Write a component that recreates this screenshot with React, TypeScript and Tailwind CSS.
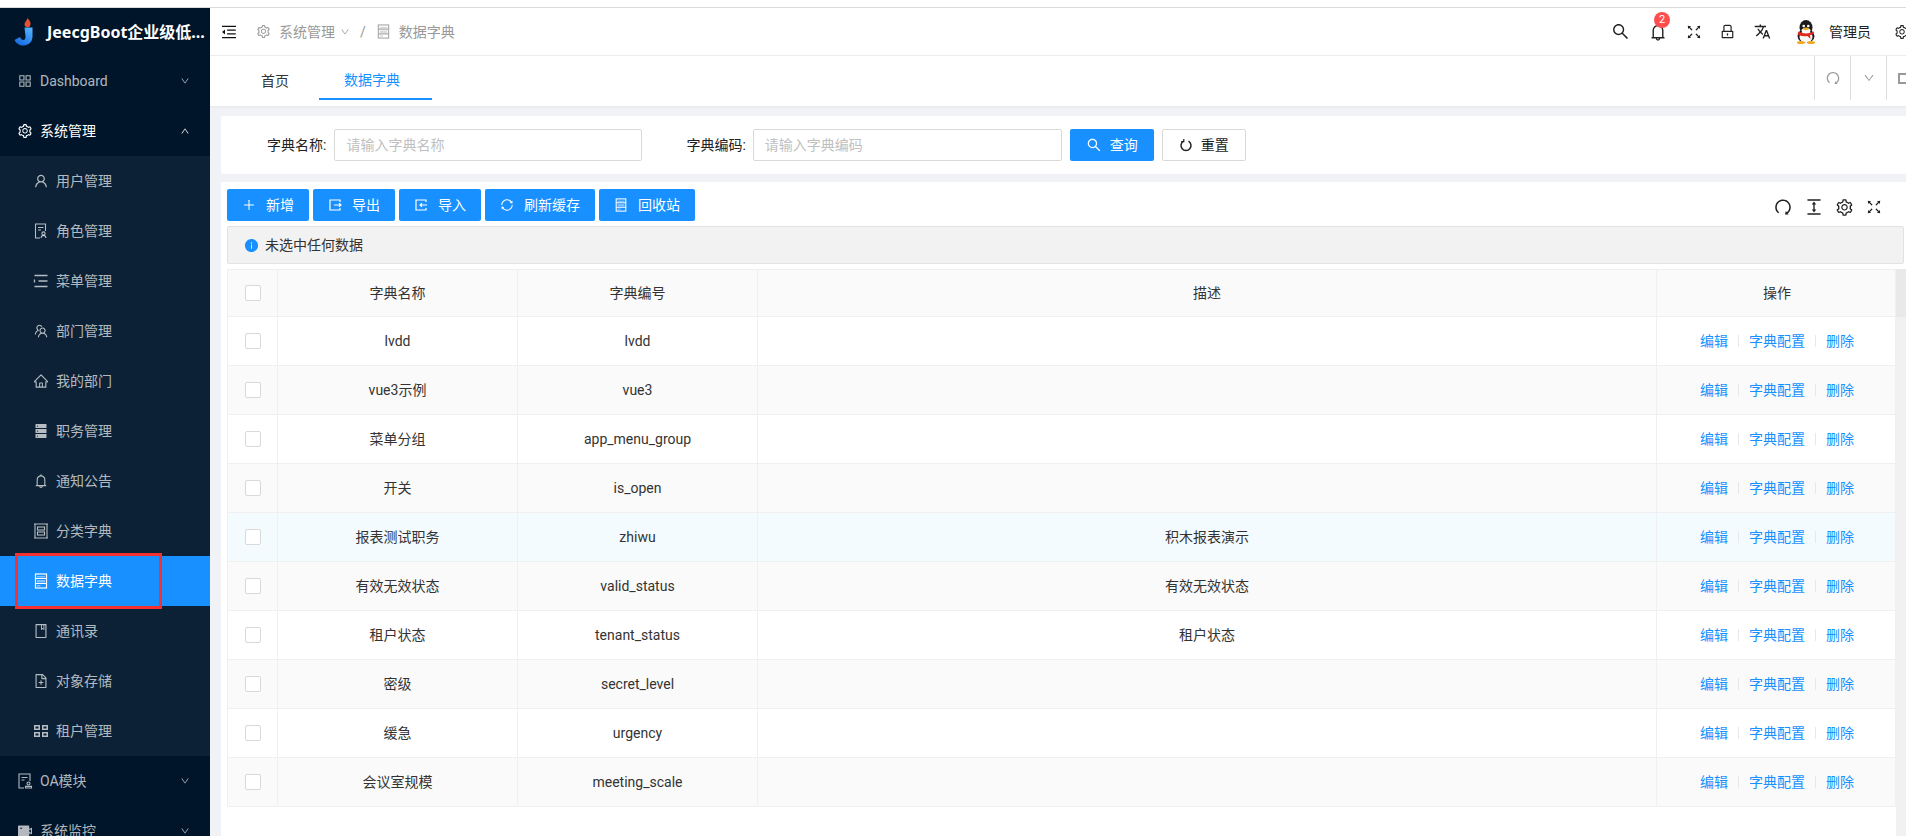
import {
  AiFillDatabase,
  AiFillInfoCircle,
  AiFillVideoCamera,
  AiOutlineAppstore,
  AiOutlineBell,
  AiOutlineBook,
  AiOutlineColumnHeight,
  AiOutlineDown,
  AiOutlineFileAdd,
  AiOutlineFullscreen,
  AiOutlineHome,
  AiOutlineLock,
  AiOutlineMenuFold,
  AiOutlinePlus,
  AiOutlineRedo,
  AiOutlineSearch,
  AiOutlineSetting,
  AiOutlineSync,
  AiOutlineTeam,
  AiOutlineUp,
  AiOutlineUser,
} from "react-icons/ai";
import { MdTranslate } from "react-icons/md";

const font = "font-['Roboto','Noto_Sans_CJK_SC',sans-serif]";

function Logo() {
  return (
    <svg width="20" height="28" viewBox="0 0 20 28">
      <defs>
        <linearGradient id="jblue" x1="0.8" y1="0" x2="0.2" y2="1">
          <stop offset="0" stopColor="#4fb2ff" />
          <stop offset="1" stopColor="#1468e0" />
        </linearGradient>
      </defs>
      <path d="M13.500 0c1.500 2 3.500 4 3 6.500-.4 2-1.600 2.800-3 2.800-1.600 0-3-1-3-3 0-2.300 2.500-3.500 3-6.300z" fill="#e8502f" />
      <path d="M10.500 9.500h8v9c0 5.500-4 9-9 9-4 0-7.500-2-9-5.500l5.500-3c.7 1.800 2 3 3.300 3 1.500 0 2.200-1.300 2.200-3.500z" fill="url(#jblue)" />
    </svg>
  );
}

function Penguin() {
  return (
    <svg width="22" height="24" viewBox="0 0 22 24">
      <ellipse cx="11" cy="7.500" rx="6.500" ry="7.500" fill="#1c1c1c" />
      <ellipse cx="11" cy="16" rx="8.500" ry="7" fill="#1c1c1c" />
      <ellipse cx="11" cy="17" rx="6.500" ry="6" fill="#f7f7f7" />
      <ellipse cx="11" cy="10.500" rx="4.500" ry="2.500" fill="#f7f7f7" />
      <circle cx="8.700" cy="6" r="1.300" fill="#fff" />
      <circle cx="13.300" cy="6" r="1.300" fill="#fff" />
      <ellipse cx="11" cy="8.700" rx="3" ry="1.300" fill="#f2a81d" />
      <path d="M3.500 11.500c4.500 2.500 10.500 2.500 15 0l.5 2.500-4 1.200.5 3.800-3-3c-3 .5-6 .3-8.500-.7l-1.500-1z" fill="#e0281c" />
      <ellipse cx="6" cy="22.500" rx="4" ry="1.500" fill="#f2a81d" />
      <ellipse cx="16" cy="22.500" rx="4" ry="1.500" fill="#f2a81d" />
    </svg>
  );
}

function DictIcon({ size = 16 }: { size?: number }) {
  return (
    <svg width={size} height={size} viewBox="0 0 16 16" fill="none" stroke="currentColor" strokeWidth="1.200">
      <rect x="2.500" y="1" width="11" height="14" />
      <path d="M2.500 5.500h11M2.500 10.500h11" />
      <rect x="4" y="3" width="8" height="1.500" fill="currentColor" opacity="0.45" stroke="none" />
      <rect x="4" y="7" width="8" height="2.500" fill="currentColor" opacity="0.45" stroke="none" />
      <rect x="4" y="12" width="3.500" height="1.500" fill="currentColor" opacity="0.45" stroke="none" />
    </svg>
  );
}

function FrameIcon() {
  return (
    <svg width="16" height="16" viewBox="0 0 16 16" fill="none" stroke="currentColor" strokeWidth="1.100">
      <path d="M1 1h14M1 15h14M2 1v14M14 1v14" />
      <rect x="4.500" y="4" width="7" height="3" />
      <rect x="4.500" y="9" width="7" height="3" />
    </svg>
  );
}

function RoleIcon() {
  return (
    <svg width="16" height="16" viewBox="0 0 16 16" fill="none" stroke="currentColor" strokeWidth="1.100">
      <path d="M7 15H2.500V1h10v7" />
      <path d="M5 4.500h5.500M5 7h3" />
      <circle cx="10.500" cy="10.500" r="1.600" />
      <path d="M8 15c.3-1.800 1.200-2.600 2.500-2.600s2.200.8 2.500 2.600" />
    </svg>
  );
}

function MenuIcon() {
  return (
    <svg width="16" height="16" viewBox="0 0 16 16" fill="none" stroke="currentColor" strokeWidth="1.300">
      <path d="M1.500 2.500h13M5.500 8h9M1.500 13.500h13" />
      <path d="M1.500 6.500v3" />
    </svg>
  );
}

function TenantIcon() {
  return (
    <svg width="16" height="16" viewBox="0 0 16 16" fill="currentColor">
      <path fillRule="evenodd" d="M1 2h6v5H1zM2.500 3.500v2h3v-2zM9 2h6v5H9zM10.500 3.500v2h3v-2zM1 9h6v5H1zM2.500 10.500v2h3v-2zM9 9h6v5H9zM10.500 10.500v2h3v-2z" />
    </svg>
  );
}

function OaIcon() {
  return (
    <svg width="16" height="16" viewBox="0 0 16 16" fill="none" stroke="currentColor" strokeWidth="1.100">
      <path d="M7 15H2V1h11v7" />
      <path d="M4.500 4.500h6M4.500 7h3" />
      <circle cx="11.500" cy="10.500" r="1.500" />
      <path d="M8.500 15h6v-1.600h-6z" />
    </svg>
  );
}

function ExportIcon() {
  return (
    <svg width="14" height="14" viewBox="0 0 14 14" fill="none" stroke="currentColor" strokeWidth="1.200">
      <path d="M12 4V2H2v10h10v-2" />
      <path d="M6 7h7M11 5.200 13 7l-2 1.800" />
    </svg>
  );
}

function ImportIcon() {
  return (
    <svg width="14" height="14" viewBox="0 0 14 14" fill="none" stroke="currentColor" strokeWidth="1.200">
      <path d="M12 4V2H2v10h10v-2" />
      <path d="M13 7H6M8 5.200 6 7l2 1.800" />
    </svg>
  );
}

function ResetIcon() {
  return (
    <svg width="14" height="14" viewBox="0 0 14 14" fill="none" stroke="currentColor" strokeWidth="1.500">
      <path d="M9.500 3.200a5 5 0 1 1-5 0" />
      <path d="M4.800 1v2.600H2.200" strokeWidth="1.200" />
    </svg>
  );
}

const subMenus = [
  { name: "用户管理", icon: <AiOutlineUser size={16} /> },
  { name: "角色管理", icon: <RoleIcon /> },
  { name: "菜单管理", icon: <MenuIcon /> },
  { name: "部门管理", icon: <AiOutlineTeam size={16} /> },
  { name: "我的部门", icon: <AiOutlineHome size={16} /> },
  { name: "职务管理", icon: <AiFillDatabase size={16} /> },
  { name: "通知公告", icon: <AiOutlineBell size={16} /> },
  { name: "分类字典", icon: <FrameIcon /> },
  { name: "数据字典", icon: <DictIcon />, active: true },
  { name: "通讯录", icon: <AiOutlineBook size={16} /> },
  { name: "对象存储", icon: <AiOutlineFileAdd size={16} /> },
  { name: "租户管理", icon: <TenantIcon /> },
];

const rows = [
  { name: "lvdd", code: "lvdd", desc: "" },
  { name: "vue3示例", code: "vue3", desc: "" },
  { name: "菜单分组", code: "app_menu_group", desc: "" },
  { name: "开关", code: "is_open", desc: "" },
  { name: "报表测试职务", code: "zhiwu", desc: "积木报表演示" },
  { name: "有效无效状态", code: "valid_status", desc: "有效无效状态" },
  { name: "租户状态", code: "tenant_status", desc: "租户状态" },
  { name: "密级", code: "secret_level", desc: "" },
  { name: "缓急", code: "urgency", desc: "" },
  { name: "会议室规模", code: "meeting_scale", desc: "" },
];

const toolButtons = [
  { label: "新增", w: "w-[82px]", icon: <AiOutlinePlus size={14} /> },
  { label: "导出", w: "w-[82px]", icon: <ExportIcon /> },
  { label: "导入", w: "w-[82px]", icon: <ImportIcon /> },
  { label: "刷新缓存", w: "w-[110px]", icon: <AiOutlineSync size={14} /> },
  { label: "回收站", w: "w-[96px]", icon: <DictIcon size={14} /> },
];

function TopMenu({ name, icon, open }: { name: string; icon: React.ReactNode; open?: boolean }) {
  return (
    <div className={`flex h-[50px] shrink-0 items-center pl-[17px] pr-[20px] ${open ? "text-white" : "text-white/70"}`}>
      <span className="flex w-[23px] shrink-0">{icon}</span>
      <span className="flex-1 text-sm">{name}</span>
      {open ? <AiOutlineUp size={10} /> : <AiOutlineDown size={10} />}
    </div>
  );
}

function Checkbox() {
  return <span className="block h-4 w-4 rounded-[2px] border border-[#d9d9d9] bg-white" />;
}

const gridCols = "grid grid-cols-[50px_240px_240px_899px_240px]";
const cell = "flex items-center justify-center border-r border-[#f0f0f0]";

export default function App() {
  return (
    <div className={`flex h-[836px] w-[1906px] flex-col overflow-hidden bg-white ${font}`}>
      <div className="h-2 shrink-0 border-b border-[#dcdcdc] bg-white" />
      <div className="flex min-h-0 flex-1">
        {/* Sidebar */}
        <aside className="relative flex w-[210px] shrink-0 flex-col bg-[#001529]">
          <div className="flex h-[48px] shrink-0 items-center pl-[14px]">
            <Logo />
            <span className="ml-[13px] whitespace-nowrap font-['Noto_Sans','Noto_Sans_CJK_SC',sans-serif] text-base font-bold text-white">JeecgBoot企业级低...</span>
          </div>
          <TopMenu name="Dashboard" icon={<AiOutlineAppstore size={16} />} />
          <TopMenu name="系统管理" icon={<AiOutlineSetting size={16} />} open />
          <div className="shrink-0 bg-[#0c2135]">
            {subMenus.map((m) => (
              <div
                key={m.name}
                className={`relative flex h-[50px] items-center pl-[33px] ${m.active ? "bg-[#1890ff] text-white" : "text-white/70"}`}
              >
                <span className="flex w-[23px] shrink-0">{m.icon}</span>
                <span className="text-sm">{m.name}</span>
                {m.active && (
                  <span className="absolute left-[15px] top-[-3px] h-[56px] w-[147px] border-[3px] border-[#f5302e]" />
                )}
              </div>
            ))}
          </div>
          <TopMenu name="OA模块" icon={<OaIcon />} />
          <TopMenu name="系统监控" icon={<AiFillVideoCamera size={16} />} />
        </aside>

        {/* Main */}
        <main className="flex min-w-0 flex-1 flex-col bg-[#f0f2f5]">
          <header className="flex h-[48px] shrink-0 items-center border-b border-[#eeeeee] bg-white pl-[10px] text-sm">
            <AiOutlineMenuFold size={18} className="text-[#111]" />
            <AiOutlineSetting size={15} className="ml-[18px] text-[#999]" />
            <span className="ml-[8px] text-[#999]">系统管理</span>
            <AiOutlineDown size={10} className="ml-[5px] text-[#999]" />
            <span className="ml-[10px] text-[#999]">/</span>
            <span className="ml-[10px] text-[#aaa]"><DictIcon size={15} /></span>
            <span className="ml-[8px] text-[#999]">数据字典</span>
            <div className="ml-auto flex items-center text-[#222]">
              <AiOutlineSearch size={19} />
              <span className="relative ml-[18px] flex">
                <AiOutlineBell size={20} />
                <span className="absolute left-[6px] top-[-10px] flex h-4 w-4 items-center justify-center rounded-full bg-[#ff4d4f] text-[11px] leading-none text-white">
                  2
                </span>
              </span>
              <AiOutlineFullscreen size={18} className="ml-[17px]" />
              <AiOutlineLock size={17} className="ml-[16px]" />
              <MdTranslate size={17} className="ml-[18px]" />
              <span className="ml-[24px] flex"><Penguin /></span>
              <span className="ml-[12px] whitespace-nowrap text-sm text-[#222]">管理员</span>
              <AiOutlineSetting size={16} className="ml-[23px] mr-[-4px] shrink-0" />
            </div>
          </header>

          <div className="flex h-[50px] shrink-0 bg-white shadow-[0_1px_3px_rgba(0,0,0,0.05)]">
            <div className="flex h-[44px] w-[109px] items-center justify-center pl-[21px] pt-[6px] text-sm text-[#333]">首页</div>
            <div className="flex h-[44px] w-[113px] items-center justify-center border-b-2 border-[#1890ff] pr-[7px] pt-[6px] text-sm text-[#1890ff]">
              数据字典
            </div>
            <div className="ml-auto flex h-[44px] text-[#999]">
              <span className="flex w-[36px] items-center justify-center border-l border-[#dddddd]"><AiOutlineRedo size={16} /></span>
              <span className="flex w-[36px] items-center justify-center border-l border-[#dddddd]"><AiOutlineDown size={12} /></span>
              <span className="flex w-[20px] items-center overflow-hidden border-l border-[#dddddd] pl-[11px]">
                <span className="block h-[11px] w-[12px] shrink-0 border-2 border-[#999]" />
              </span>
            </div>
          </div>

          {/* Search */}
          <div className="ml-[11px] mt-[10px] flex h-[58px] shrink-0 items-center rounded-[2px] bg-white text-sm text-[#222]">
            <span className="ml-[46px] whitespace-nowrap">字典名称:</span>
            <div className="ml-[8px] flex h-8 w-[308px] items-center rounded-[2px] border border-[#d9d9d9] pl-[11px] text-[#bfbfbf]">请输入字典名称</div>
            <span className="ml-[44px] whitespace-nowrap">字典编码:</span>
            <div className="ml-[7px] flex h-8 w-[309px] items-center rounded-[2px] border border-[#d9d9d9] pl-[11px] text-[#bfbfbf]">请输入字典编码</div>
            <button className="ml-[8px] flex h-8 w-[84px] items-center justify-center gap-[8px] rounded-[2px] bg-[#1890ff] text-white">
              <AiOutlineSearch size={16} />查询
            </button>
            <button className="ml-[8px] flex h-8 w-[84px] items-center justify-center gap-[8px] rounded-[2px] border border-[#d9d9d9] bg-white">
              <ResetIcon />重置
            </button>
          </div>

          {/* Table card */}
          <div className="ml-[11px] mt-[8px] flex min-h-0 flex-1 flex-col bg-white">
            <div className="flex h-[44px] shrink-0 items-start pl-[6px] pr-[23px] pt-[7px]">
              <div className="flex gap-[4px]">
                {toolButtons.map((b) => (
                  <button key={b.label} className={`flex h-8 items-center justify-center gap-[10px] rounded-[2px] bg-[#1890ff] text-sm text-white ${b.w}`}>
                    {b.icon}{b.label}
                  </button>
                ))}
              </div>
              <div className="ml-auto mt-[8px] flex items-center gap-[11px] text-[#222]">
                <AiOutlineRedo size={20} />
                <AiOutlineColumnHeight size={20} />
                <AiOutlineSetting size={19} />
                <AiOutlineFullscreen size={18} />
              </div>
            </div>
            <div className="ml-[6px] mr-[2px] flex h-[38px] shrink-0 items-center rounded-[2px] border border-[#e2e2e2] bg-[#f2f2f2] pl-[16px] text-sm text-[#333]">
              <AiFillInfoCircle size={15} className="mr-[6px] text-[#1890ff]" />
              未选中任何数据
            </div>
            <div className="mt-[5px] flex min-h-0 flex-1 pl-[6px]">
              <div className="w-[1669px] shrink-0 text-sm text-[#333]">
                <div className={`${gridCols} h-[48px] border-x border-y border-[#f0f0f0] bg-[#fafafa]`}>
                  <div className={cell}><Checkbox /></div>
                  <div className={cell}>字典名称</div>
                  <div className={cell}>字典编号</div>
                  <div className={cell}>描述</div>
                  <div className="flex items-center justify-center">操作</div>
                </div>
                {rows.map((r, i) => (
                  <div
                    key={r.code}
                    className={`${gridCols} h-[49px] border-x border-b border-[#f0f0f0] ${i === 4 ? "bg-[#f4fbff]" : i % 2 === 1 ? "bg-[#fafafa]" : "bg-white"}`}
                  >
                    <div className={cell}><Checkbox /></div>
                    <div className={cell}>{r.name}</div>
                    <div className={cell}>{r.code}</div>
                    <div className={cell}>{r.desc}</div>
                    <div className="flex items-center justify-center text-[#1890ff]">
                      编辑
                      <span className="mx-[10px] h-[12px] w-px bg-[#e8e8e8]" />
                      字典配置
                      <span className="mx-[10px] h-[12px] w-px bg-[#e8e8e8]" />
                      删除
                    </div>
                  </div>
                ))}
              </div>
              <div className="flex flex-1 flex-col bg-[#f1f1f1]">
                <div className="h-[48px] bg-[#e9e9e9]" />
              </div>
            </div>
          </div>
        </main>
      </div>
    </div>
  );
}
